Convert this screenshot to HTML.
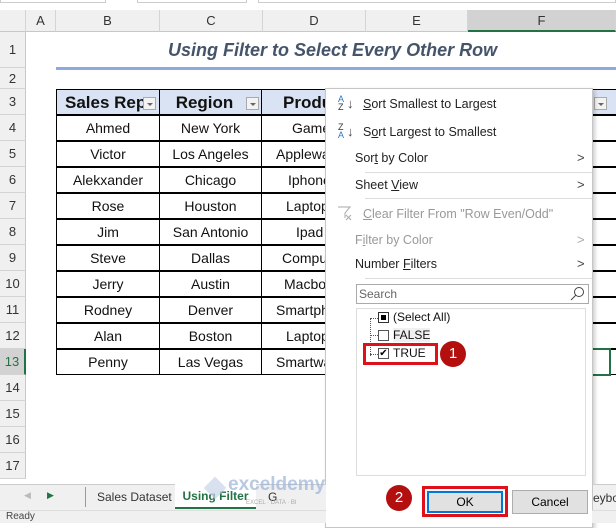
<!DOCTYPE html>
<html><head><style>
*{margin:0;padding:0;box-sizing:border-box}
body{width:616px;height:523px;overflow:hidden;background:#fff;font-family:"Liberation Sans",sans-serif;position:relative}
.a{position:absolute}
.ch{position:absolute;top:10px;height:22px;background:#f0f0f0;border-right:1px solid #d4d4d4;border-bottom:1px solid #c8c8c8;font-size:13px;color:#333;text-align:center;line-height:22px}
.rh{position:absolute;left:0;width:26px;background:#f0f0f0;border-bottom:1px solid #d4d4d4;border-right:1px solid #c8c8c8;font-size:13px;color:#333;text-align:center}
.c{position:absolute;height:26px;border:1px solid #000;margin:-1px 0 0 -1px;font-size:14px;text-align:center;line-height:25px;color:#111;overflow:hidden;white-space:nowrap}
.mi{position:absolute;left:355px;font-size:12.5px;color:#222}
.arr{position:absolute;left:577px;font-size:13px;color:#444}
.sep{position:absolute;left:365px;width:227px;height:1px;background:#ddd}
.dd{position:absolute;width:13px;height:13px;border:1px solid #aaa;background:#f3f3f3;top:97px}
.dd:after{content:"";position:absolute;left:3px;top:5px;border-left:3px solid transparent;border-right:3px solid transparent;border-top:3px solid #666}
</style></head><body>
<div class="a" style="left:0;top:0;width:106px;height:3px;border:1px solid #ccc;border-top:none"></div>
<div class="a" style="left:137px;top:0;width:110px;height:3px;border:1px solid #ccc;border-top:none"></div>
<div class="a" style="left:258px;top:0;width:358px;height:3px;border:1px solid #ccc;border-top:none"></div>
<div class="ch" style="left:0;width:26px"></div>
<div class="ch" style="left:26px;width:30px">A</div>
<div class="ch" style="left:56px;width:104px">B</div>
<div class="ch" style="left:160px;width:103px">C</div>
<div class="ch" style="left:263px;width:103px">D</div>
<div class="ch" style="left:366px;width:102px">E</div>
<div class="ch" style="left:468px;width:148px;background:#d2d2d2;border-bottom:2px solid #217346">F</div>
<div class="rh" style="top:32px;height:36px;line-height:36px">1</div>
<div class="rh" style="top:68px;height:21px;line-height:21px">2</div>
<div class="rh" style="top:89px;height:26px;line-height:26px">3</div>
<div class="rh" style="top:115px;height:26px;line-height:26px">4</div>
<div class="rh" style="top:141px;height:26px;line-height:26px">5</div>
<div class="rh" style="top:167px;height:26px;line-height:26px">6</div>
<div class="rh" style="top:193px;height:26px;line-height:26px">7</div>
<div class="rh" style="top:219px;height:26px;line-height:26px">8</div>
<div class="rh" style="top:245px;height:26px;line-height:26px">9</div>
<div class="rh" style="top:271px;height:26px;line-height:26px">10</div>
<div class="rh" style="top:297px;height:26px;line-height:26px">11</div>
<div class="rh" style="top:323px;height:26px;line-height:26px">12</div>
<div class="rh" style="top:349px;height:26px;line-height:26px;background:#d2d2d2;color:#217346;border-right:2px solid #217346">13</div>
<div class="rh" style="top:375px;height:26px;line-height:26px">14</div>
<div class="rh" style="top:401px;height:26px;line-height:26px">15</div>
<div class="rh" style="top:427px;height:26px;line-height:26px">16</div>
<div class="rh" style="top:453px;height:26px;line-height:26px">17</div>
<div class="a" style="left:56px;top:40px;width:560px;font-size:18px;font-weight:bold;font-style:italic;color:#44546a;padding-left:112px">Using Filter to Select Every Other Row</div>
<div class="a" style="left:56px;top:67px;width:560px;height:3px;background:#8eaadb"></div>
<div class="c" style="left:57px;top:90px;width:104px;background:#dae3f3;font-weight:bold;font-size:17px;text-align:left;padding-left:8px">Sales Rep</div>
<div class="dd" style="left:143px"></div>
<div class="c" style="left:160px;top:90px;width:103px;background:#dae3f3;font-weight:bold;font-size:17px;padding-right:12px">Region</div>
<div class="dd" style="left:246px"></div>
<div class="c" style="left:262px;top:90px;width:103px;background:#dae3f3;font-weight:bold;font-size:17px;text-align:left;padding-left:21px">Product</div>
<div class="c" style="left:468px;top:90px;width:150px;background:#dae3f3"></div>
<div class="dd" style="left:594px"></div>
<div id="rows"></div>
<script>
var d=[["Ahmed","New York","Games"],["Victor","Los Angeles","Applewatch"],["Alekxander","Chicago","Iphone"],["Rose","Houston","Laptop"],["Jim","San Antonio","Ipad"],["Steve","Dallas","Computer"],["Jerry","Austin","Macbook"],["Rodney","Denver","Smartphone"],["Alan","Boston","Laptop"],["Penny","Las Vegas","Smartwatch"]];
var p=[30,14,26,24,34,20,22,14,24,14];
var h="";d.forEach(function(r,i){var t=116+i*26;
h+='<div class="c" style="left:57px;top:'+t+'px;width:104px">'+r[0]+'</div><div class="c" style="left:160px;top:'+t+'px;width:103px">'+r[1]+'</div><div class="c" style="left:262px;top:'+t+'px;width:103px;text-align:left;padding-left:'+p[i]+'px">'+r[2]+'</div><div class="c" style="left:468px;top:'+t+'px;width:150px"></div>';});
document.getElementById("rows").innerHTML=h;
</script>
<div class="a" style="left:468px;top:348px;width:143px;height:28px;border:2px solid #217346"></div>
<!-- menu -->
<div class="a" style="left:325px;top:88px;width:268px;height:440px;background:#fff;border:1px solid #c6c6c6;box-shadow:2px 2px 4px rgba(0,0,0,.2)"></div>
<div class="a" style="left:338px;top:95px;font-size:9px;line-height:8px;color:#2b78c5">A<br><span style="color:#333">Z</span></div><div class="a" style="left:347px;top:96px;font-size:13px;color:#444">↓</div>
<div class="mi" style="top:97px;left:363px"><u>S</u>ort Smallest to Largest</div>
<div class="a" style="left:338px;top:123px;font-size:9px;line-height:8px;color:#333">Z<br><span style="color:#2b78c5">A</span></div><div class="a" style="left:347px;top:124px;font-size:13px;color:#444">↓</div>
<div class="mi" style="top:125px;left:363px">S<u>o</u>rt Largest to Smallest</div>
<div class="mi" style="top:151px">Sor<u>t</u> by Color</div><div class="arr" style="top:150px">&gt;</div>
<div class="sep" style="top:172px"></div>
<div class="mi" style="top:178px">Sheet <u>V</u>iew</div><div class="arr" style="top:177px">&gt;</div>
<div class="sep" style="top:198px"></div>
<svg class="a" style="left:337px;top:205px" width="16" height="16"><path d="M1 2h12l-5 6v5" fill="none" stroke="#aaa"/><path d="M9 10l5 5M14 10l-5 5" stroke="#aaa"/></svg>
<div class="mi" style="top:207px;left:363px;color:#999"><u>C</u>lear Filter From "Row Even/Odd"</div>
<div class="mi" style="top:233px;color:#999">F<u>i</u>lter by Color</div><div class="arr" style="top:232px;color:#aaa">&gt;</div>
<div class="mi" style="top:257px">Number <u>F</u>ilters</div><div class="arr" style="top:256px">&gt;</div>
<div class="sep" style="top:278px"></div>
<div class="a" style="left:356px;top:284px;width:233px;height:20px;border:1px solid #aaa;font-size:12px;color:#666;padding:2px 2px">Search</div>
<svg class="a" style="left:570px;top:286px" width="16" height="16"><circle cx="9" cy="6" r="4.5" fill="none" stroke="#444"/><path d="M6 9L1 14" stroke="#444"/></svg>
<div class="a" style="left:356px;top:308px;width:230px;height:168px;border:1px solid #ddd"></div>
<div class="a" style="left:370px;top:318px;height:38px;border-left:1px dotted #555"></div>
<div class="a" style="left:370px;top:318px;width:8px;border-top:1px dotted #555"></div>
<div class="a" style="left:370px;top:335px;width:8px;border-top:1px dotted #555"></div>
<div class="a" style="left:370px;top:354px;width:8px;border-top:1px dotted #555"></div>
<div class="a" style="left:378px;top:312px;width:11px;height:11px;border:1px solid #333;background:#fff"><div style="margin:2px;width:5px;height:5px;background:#000"></div></div>
<div class="a" style="left:393px;top:310px;font-size:12px;color:#111">(Select All)</div>
<div class="a" style="left:378px;top:330px;width:11px;height:11px;border:1px solid #555;background:#fff"></div>
<div class="a" style="left:393px;top:328px;font-size:12px;color:#111;background:#f0f0f0">FALSE</div>
<div class="a" style="left:378px;top:348px;width:11px;height:11px;border:1px solid #555;background:#fff;font-size:10px;line-height:10px;text-align:center">✔</div>
<div class="a" style="left:393px;top:346px;font-size:12px;color:#111">TRUE</div>
<div class="a" style="left:363px;top:343px;width:75px;height:22px;border:3px solid #e0101a"></div>
<div class="a" style="left:440px;top:341px;width:26px;height:26px;border-radius:50%;background:#b30f0f;color:#fff;font-size:15px;text-align:center;line-height:26px">1</div>
<!-- tab bar -->
<div class="a" style="left:0;top:484px;width:326px;height:26px;background:#f0f0f0;border-top:1px solid #ccc"></div>
<div class="a" style="left:593px;top:484px;width:23px;height:26px;background:#f0f0f0;border-top:1px solid #ccc;font-size:12px;line-height:26px;color:#333;overflow:hidden">eybo</div>
<div class="a" style="left:24px;top:490px;font-size:9px;color:#bbb">◀</div>
<div class="a" style="left:47px;top:490px;font-size:9px;color:#217346">▶</div>
<div class="a" style="left:85px;top:487px;height:20px;border-left:1px solid #999"></div>
<div class="a" style="left:97px;top:490px;font-size:12px;color:#333">Sales Dataset</div>
<div class="a" style="left:175px;top:484px;width:81px;height:25px;background:#fff;border-bottom:2px solid #217346;font-size:12px;font-weight:bold;color:#217346;line-height:25px;text-align:center">Using Filter</div>
<div class="a" style="left:268px;top:490px;font-size:12px;color:#333">G</div>
<div class="a" style="left:0;top:510px;width:616px;height:13px;background:#f0f0f0;border-top:1px solid #ddd;font-size:10px;color:#444;padding-left:6px">Ready</div>
<div class="a" style="left:205px;top:478px;width:20px;height:20px;background:#c9d4ea;opacity:.7;transform:rotate(45deg) scale(.8)"></div>
<div class="a" style="left:228px;top:474px;font-size:19px;font-weight:bold;color:#9fb7da;opacity:.75">exceldemy</div>
<div class="a" style="left:246px;top:500px;font-size:6px;color:#aaa">EXCEL · DATA · BI</div>
<div class="a" style="left:326px;top:510px;width:266px;height:13px;background:#fff"></div>
<div class="a" style="left:386px;top:485px;width:26px;height:26px;border-radius:50%;background:#b30f0f;color:#fff;font-size:15px;text-align:center;line-height:26px">2</div>
<div class="a" style="left:422px;top:486px;width:86px;height:31px;border:3px solid #e0101a"></div>
<div class="a" style="left:427px;top:491px;width:76px;height:22px;background:#e1e1e1;border:2px solid #0078d7;font-size:12px;text-align:center;line-height:18px">OK</div>
<div class="a" style="left:512px;top:490px;width:76px;height:24px;background:#e1e1e1;border:1px solid #adadad;font-size:12px;text-align:center;line-height:22px">Cancel</div>
</body></html>
